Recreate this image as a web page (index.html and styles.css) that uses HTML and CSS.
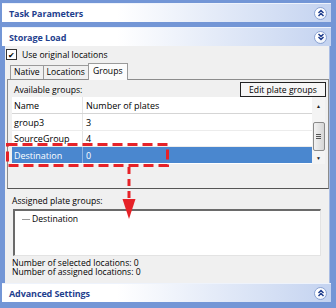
FILE: index.html
```html
<!DOCTYPE html>
<html lang="en">
<head>
    <meta charset="UTF-8">
    <title>Storage Load</title>
    <link rel="stylesheet" href="styles.css">
</head>
<body>
    <div class="frame">
        <div class="bar">
            <span>Task Parameters</span>
            <span class="toggle">
                <svg width="8" height="8" viewBox="0 0 8 8"><path d="M1.5 4 L4 1.5 L6.5 4 M1.5 7 L4 4.5 L6.5 7" fill="none" stroke="#213f8e" stroke-width="1.5"/></svg>
            </span>
        </div>
        <div class="bar">
            <span>Storage Load</span>
            <span class="toggle">
                <svg width="8" height="8" viewBox="0 0 8 8"><path d="M1.5 1 L4 3.5 L6.5 1 M1.5 4 L4 6.5 L6.5 4" fill="none" stroke="#213f8e" stroke-width="1.5"/></svg>
            </span>
        </div>
        <div class="panel">
            <label class="check"><span class="box">&#10004;</span>Use original locations</label>
            <div class="tabs">
                <span class="tab">Native</span>
                <span class="tab">Locations</span>
                <span class="tab active">Groups</span>
            </div>
            <div class="page">
                <div class="page-top">
                    <span>Available groups:</span>
                    <button class="edit">Edit plate groups</button>
                </div>
                <div class="grid-wrap">
                    <div class="grid">
                        <div class="row head"><span class="c1">Name</span><span class="c2">Number of plates</span></div>
                        <div class="row"><span class="c1">group3</span><span class="c2">3</span></div>
                        <div class="row"><span class="c1">SourceGroup</span><span class="c2">4</span></div>
                        <div class="row sel"><span class="c1">Destination</span><span class="c2">0</span></div>
                    </div>
                    <div class="scroll">
                        <span class="arr">&#9650;</span>
                        <span class="thumb"><i></i><i></i><i></i></span>
                        <span class="arr">&#9660;</span>
                    </div>
                    <!-- highlight of the dragged row and the drop arrow -->
                    <svg class="mark" width="164" height="78" viewBox="0 0 164 78">
                        <rect x="1.5" y="1.5" width="160" height="21" fill="none" stroke="#e62228" stroke-width="3" stroke-dasharray="10 5"/>
                        <path d="M123 24 V57" stroke="#e62228" stroke-width="3" stroke-dasharray="7 5"/>
                        <path d="M116.5 56 H129.5 L123 76 Z" fill="#e62228"/>
                    </svg>
                </div>
            </div>
            <div class="assigned">Assigned plate groups:</div>
            <div class="tree"><span class="line"></span>Destination</div>
            <div class="counts">
                <div>Number of selected locations: 0</div>
                <div>Number of assigned locations: 0</div>
            </div>
        </div>
        <div class="bar">
            <span>Advanced Settings</span>
            <span class="toggle">
                <svg width="8" height="8" viewBox="0 0 8 8"><path d="M1.5 4 L4 1.5 L6.5 4 M1.5 7 L4 4.5 L6.5 7" fill="none" stroke="#213f8e" stroke-width="1.5"/></svg>
            </span>
        </div>
    </div>
</body>
</html>
```

FILE: styles.css
```css
body {
    margin: 0;
    background-color: #fff;
    font-family: "Open Sans", "Noto Sans", sans-serif;
    font-size: 8.6px;
    color: #000;
}

.frame {
    width: 336px;
    height: 308px;
    box-sizing: border-box;
    background-color: #7396d6;
    padding: 3px 5px 0 2px;
    display: flex;
    flex-direction: column;
}

.bar {
    height: 19px;
    flex: none;
    display: flex;
    align-items: center;
    justify-content: space-between;
    padding: 0 4px 0 7px;
    background: linear-gradient(to right, #ffffff 35%, #c4d3f0);
    border-top: 1px solid #eef3fc;
    box-sizing: border-box;
    color: #1f3f8e;
    font-weight: bold;
    font-size: 9px;
    letter-spacing: -0.1px;
}

.bar + .bar {
    margin-top: 5px;
}

.toggle {
    width: 11px;
    height: 11px;
    border-radius: 50%;
    background: radial-gradient(circle at 40% 35%, #ffffff 40%, #dde6f6);
    border: 1px solid #8ba3d3;
    display: flex;
    align-items: center;
    justify-content: center;
}

.panel {
    flex: none;
    height: 237px;
    box-sizing: border-box;
    margin: 0 1px 0 3px;
    background-color: #f0f0f0;
    border-right: 1px solid #a9bde4;
    display: flex;
    flex-direction: column;
}

.check {
    display: flex;
    align-items: center;
    gap: 5px;
    height: 13px;
    margin-top: 2px;
    padding-left: 1px;
}

.box {
    width: 9px;
    height: 9px;
    border: 1px solid #333;
    background: #fff;
    font-size: 8px;
    line-height: 9px;
    text-align: center;
}

.tabs {
    display: flex;
    margin-top: 2px;
    padding-left: 5px;
    height: 16px;
    align-items: flex-end;
}

.tab {
    border: 1px solid #9a9a9a;
    border-bottom: none;
    padding: 0 3px;
    height: 13px;
    line-height: 13px;
    margin-right: -1px;
    background: #f0f0f0;
}

.tab.active {
    height: 16px;
    line-height: 14px;
    background: #fcfcfc;
    position: relative;
    top: 1px;
    padding: 0 4px;
}

.page {
    height: 110px;
    box-sizing: border-box;
    margin-left: 2px;
    border: 1px solid #8c8c8c;
    border-bottom-color: #555;
    background: #f0f0f0;
    padding-top: 2px;
}

.page-top {
    display: flex;
    justify-content: space-between;
    align-items: center;
    padding-left: 6px;
    height: 15px;
}

.edit {
    font: inherit;
    background: #f6f6f6;
    border: 1px solid #222;
    height: 15px;
    width: 86px;
    padding: 0;
    margin-right: 2px;
}

.grid-wrap {
    position: relative;
    margin: 0 3px 0 4px;
    height: 67px;
    background: #fff;
    display: flex;
}

.grid {
    flex: 1;
    font-size: 9px;
}

.row {
    display: flex;
    height: 16px;
    align-items: center;
    border-top: 1px solid #ececec;
    box-sizing: border-box;
}

.row.head {
    height: 17px;
    border-top: none;
    border-bottom: 1px solid #d5d5d5;
}

.row.head + .row {
    border-top: none;
}

.c1 {
    width: 71px;
    height: 100%;
    display: flex;
    align-items: center;
    padding-left: 2px;
    box-sizing: border-box;
    border-right: 1px solid #e4e4e4;
}

.c2 {
    padding-left: 3px;
}

.row.sel {
    height: 17px;
    background: #4a87cf;
    color: #fff;
}

.row.sel .c1 {
    border-right-color: #8fb4e2;
}

.scroll {
    width: 13px;
    background: #f4f4f4;
    display: flex;
    flex-direction: column;
    align-items: center;
    font-size: 5px;
    color: #222;
    padding-top: 6px;
}

.thumb {
    width: 12px;
    height: 29px;
    margin: 13px 0 4px;
    border: 1px solid #8a8a8a;
    border-radius: 2px;
    background: linear-gradient(to right, #f2f2f2, #d6d6d6);
    box-sizing: border-box;
    display: flex;
    flex-direction: column;
    align-items: center;
    justify-content: center;
    gap: 1px;
}

.thumb i {
    width: 5px;
    border-top: 1px solid #555;
}

.mark {
    position: absolute;
    left: -6px;
    top: 46px;
}

.assigned {
    margin-top: 7px;
    padding-left: 7px;
    height: 10px;
    line-height: 10px;
}

.tree {
    margin: 3px 8px 0 8px;
    height: 47px;
    box-sizing: border-box;
    background: #fff;
    border-top: 2px solid #6a6a6a;
    border-left: 2px solid #6a6a6a;
    border-right: 1px solid #e3e3e3;
    border-bottom: 1px solid #e3e3e3;
    padding: 2px 0 0 7px;
    display: flex;
    align-items: flex-start;
    gap: 2px;
}

.line {
    width: 8px;
    border-top: 1px solid #999;
    margin-top: 6px;
}

.counts {
    margin-top: 3px;
    padding-left: 7px;
    line-height: 9px;
}
```
